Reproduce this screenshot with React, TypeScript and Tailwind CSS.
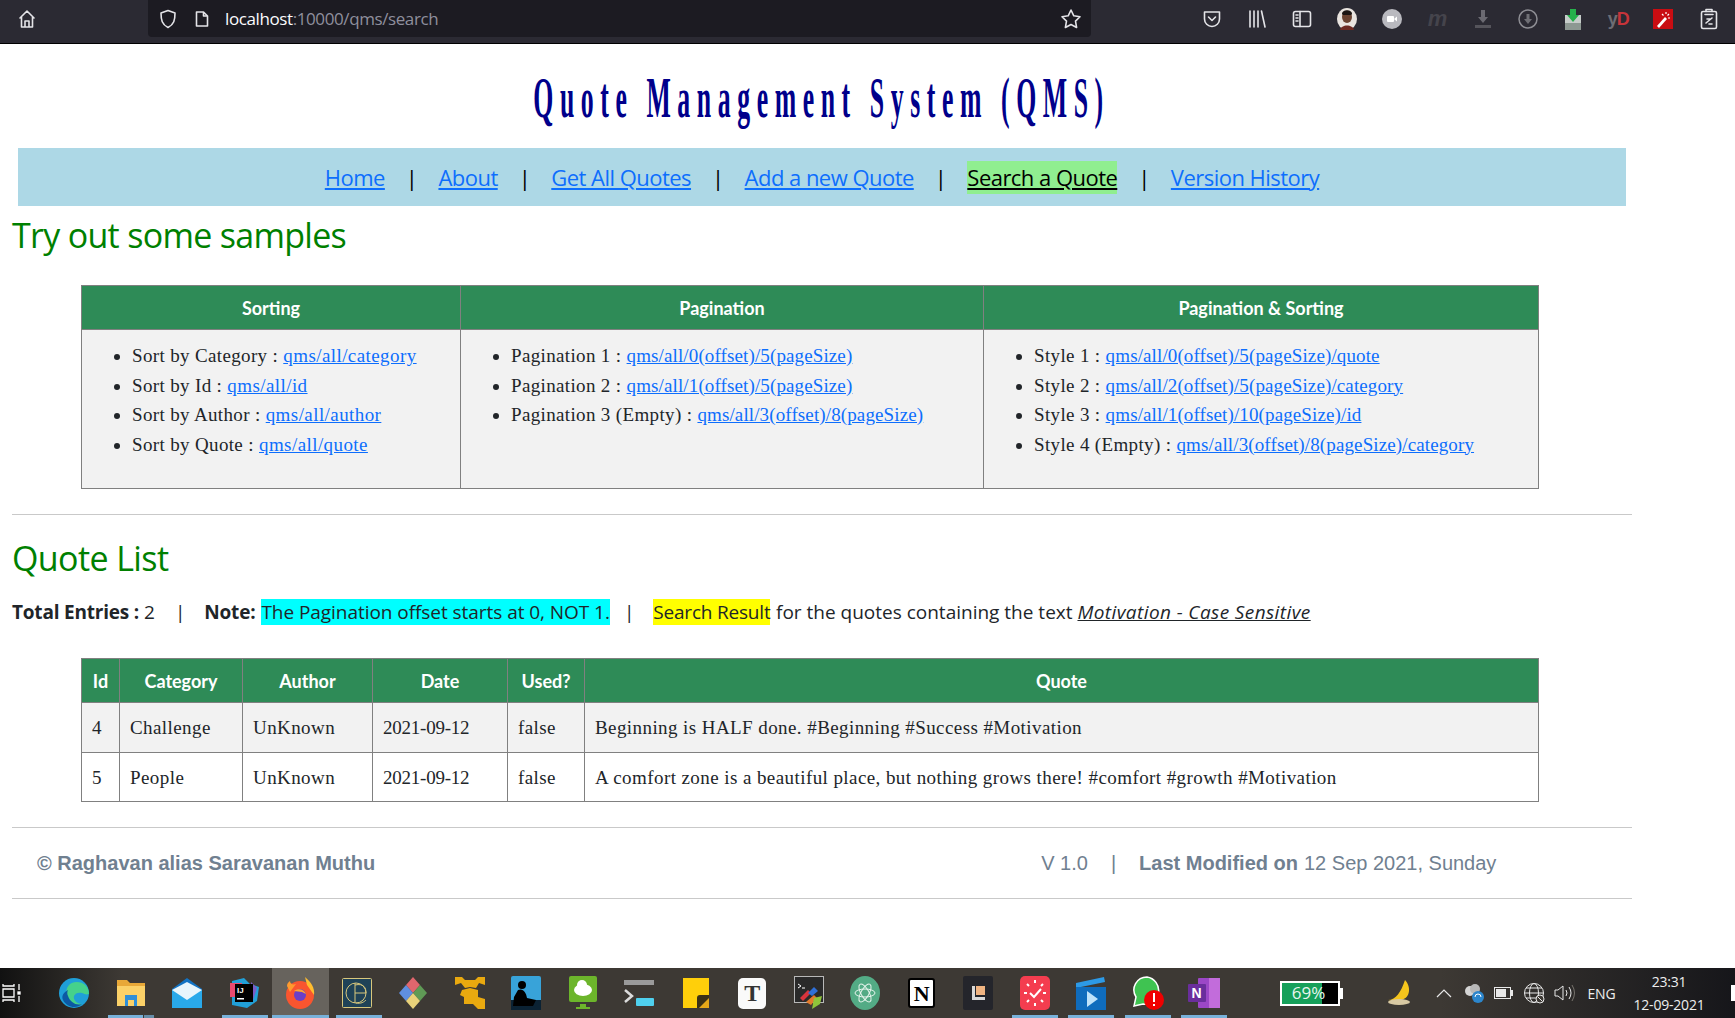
import { ReactNode } from 'react';

const serif = "font-['Liberation_Serif',serif]";
const heading = "font-['Lato',sans-serif] font-bold text-white text-[18px] text-center";

function ToolIcon({ children, className = '' }: { children: ReactNode; className?: string }) {
  return <div className={`w-[45.2px] h-[37px] flex items-center justify-center ${className}`}>{children}</div>;
}

function Toolbar() {
  const line = { fill: 'none', stroke: '#e4e4e8', strokeWidth: 1.6, strokeLinecap: 'round' as const, strokeLinejoin: 'round' as const };
  return (
    <header className="h-[44px] bg-[#2b2a33] border-b border-black flex shrink-0">
      <div className="w-[148px] h-[37px] flex items-center pl-[17px]">
        <svg width="20" height="20" viewBox="0 0 20 20" {...line}>
          <path d="M3 9 10 2l7 7M4.5 8v10h11V8M8 18v-6h4v6" />
        </svg>
      </div>
      <div className="w-[943px] h-[37px] bg-[#1c1b22] rounded-b-[4px] flex items-center">
        <svg className="ml-[11px]" width="18" height="20" viewBox="0 0 18 20" {...line}>
          <path d="M9 1.5 2 4c0 7 1 11.500 7 14.500C15 15.500 16 11 16 4Z" />
        </svg>
        <svg className="ml-[17px]" width="16" height="18" viewBox="0 0 16 18" {...line}>
          <path d="M2.500 2h7l4 4v10h-11ZM9.500 2v4h4" />
        </svg>
        <span className="ml-[15px] font-['Open_Sans',sans-serif] text-[17px] text-[#fbfbfe] tracking-[-0.4px]">
          localhost<span className="text-[#8f8f9d]">:10000/qms/search</span>
        </span>
        <svg className="ml-auto mr-[9px]" width="22" height="22" viewBox="0 0 22 22" {...line}>
          <path d="m11 2 2.800 5.800 6.200.9-4.500 4.400 1.100 6.400L11 16.500l-5.600 3 1.100-6.400L2 8.700l6.200-.9Z" />
        </svg>
      </div>
      <div className="flex pl-[98px]">
        <ToolIcon>
          <svg width="20" height="20" viewBox="0 0 20 20" {...line}>
            <path d="M2.500 3h15v7a7.500 7.500 0 0 1-15 0ZM6.500 8l3.500 3.500L13.500 8" />
          </svg>
        </ToolIcon>
        <ToolIcon>
          <svg width="20" height="20" viewBox="0 0 20 20" {...line}>
            <path d="M3 2v16M7 2v16M11 2v16M14.500 2l3.500 16" />
          </svg>
        </ToolIcon>
        <ToolIcon>
          <svg width="20" height="20" viewBox="0 0 20 20" {...line}>
            <rect x="1.500" y="2.500" width="17" height="15" rx="2" />
            <path d="M8 2.500v15M4 6h2M4 9h2M4 12h2" />
          </svg>
        </ToolIcon>
        <ToolIcon>
          <svg width="20" height="22" viewBox="0 0 20 22">
            <ellipse cx="10" cy="11" rx="10" ry="11" fill="#e9e4df" />
            <ellipse cx="10" cy="9" rx="5" ry="6" fill="#6a4230" />
            <path d="M5 6c0-5 10-5 10 0l-1 1H6Z" fill="#1c1512" />
            <path d="M3 22c1-6 13-6 14 0Z" fill="#6d2a22" />
          </svg>
        </ToolIcon>
        <ToolIcon>
          <svg width="20" height="20" viewBox="0 0 20 20">
            <circle cx="10" cy="10" r="10" fill="#b9b9bf" />
            <rect x="5" y="7" width="7" height="6" rx="1" fill="#fff" />
            <path d="m12 10 3-2.500v5Z" fill="#fff" />
          </svg>
        </ToolIcon>
        <ToolIcon>
          <span className="font-['Liberation_Sans',sans-serif] italic font-bold text-[22px] text-[#45444c] leading-none">m</span>
        </ToolIcon>
        <ToolIcon>
          <svg width="20" height="20" viewBox="0 0 20 20">
            <path d="M8 1h4v7h3l-5 6-5-6h3Z" fill="#6b6a72" />
            <rect x="2" y="16" width="16" height="3" fill="#55545b" />
          </svg>
        </ToolIcon>
        <ToolIcon>
          <svg width="20" height="20" viewBox="0 0 20 20" fill="none">
            <circle cx="10" cy="10" r="9" stroke="#8e8e94" strokeWidth="1.500" />
            <path d="M8.500 5h3v5H14l-4 5-4-5h2.500Z" fill="#6f6f75" />
          </svg>
        </ToolIcon>
        <ToolIcon>
          <svg width="20" height="22" viewBox="0 0 20 22">
            <path d="M2 7h16v15H2Z" fill="#c6ccc9" />
            <path d="M2 15h16v7H2Z" fill="#8d9892" />
            <path d="M7 1h6v6h3l-6 7-6-7h3Z" fill="#26b14b" />
          </svg>
        </ToolIcon>
        <ToolIcon>
          <span className="font-['Liberation_Sans',sans-serif] font-bold text-[18px] leading-none text-[#6d6d74] tracking-[-1px]">
            y<span className="text-[#c7343a]">D</span>
          </span>
        </ToolIcon>
        <ToolIcon>
          <svg width="20" height="20" viewBox="0 0 20 20">
            <rect width="20" height="20" fill="#c90d12" />
            <path d="m4 17 8-9 2 2-8 9Z" fill="#fff" />
            <path d="M13 3v2M16 5l-1.500 1.500M17 9h-2M9 5l1.500 1.500" stroke="#fff" strokeWidth="1.200" />
          </svg>
        </ToolIcon>
        <ToolIcon>
          <svg width="18" height="22" viewBox="0 0 18 22" {...line}>
            <rect x="1.500" y="3.500" width="15" height="17" rx="1.500" />
            <path d="M6 3.500V1.500h6v2M5 6.500h8M6 15l6-5M7 11h3M9 16h3" />
          </svg>
        </ToolIcon>
      </div>
    </header>
  );
}

function Sep() {
  return <span className="text-black">|</span>;
}

function Nav() {
  const link = 'text-[#0d6efd] underline';
  return (
    <nav className="mt-[21px] ml-[18px] w-[1608px] h-[58px] bg-[#add8e6] flex items-center justify-center gap-[21px] text-[22px] tracking-[-0.53px]">
      <a className={link}>Home</a>
      <Sep />
      <a className={link}>About</a>
      <Sep />
      <a className={link}>Get All Quotes</a>
      <Sep />
      <a className={link}>Add a new Quote</a>
      <Sep />
      <a className="text-black underline bg-[#90ee90]">Search a Quote</a>
      <Sep />
      <a className={link}>Version History</a>
    </nav>
  );
}

function Sample({ label, href }: { label: string; href: string }) {
  // the offset links run long in this font, so they get tighter spacing
  const spacing = href.includes('(') ? 'tracking-[0.12px]' : 'tracking-[0.42px]';
  return (
    <li className="h-[29.5px] leading-[29.5px]">
      {label} : <a className={`text-[#0d6efd] underline ${spacing}`}>{href}</a>
    </li>
  );
}

const thClass = `${heading} bg-[#2e8b57] border border-[#808080] h-[44px] pt-[2px] font-bold tracking-normal`;
const sampleTd = `border border-[#808080] align-top pt-[11px] pl-[33px] h-[159px]`;

function SamplesTable() {
  return (
    <table className={`ml-[81px] w-[1457px] border-collapse table-fixed ${serif} text-[19px] text-[#212529] tracking-[0.35px]`}>
      <colgroup>
        <col className="w-[379px]" />
        <col className="w-[523px]" />
        <col className="w-[555px]" />
      </colgroup>
      <thead>
        <tr>
          <th className={thClass}>Sorting</th>
          <th className={thClass}>Pagination</th>
          <th className={thClass}>Pagination &amp; Sorting</th>
        </tr>
      </thead>
      <tbody>
        <tr className="bg-[#f2f2f2]">
          <td className={sampleTd}>
            <ul className="list-disc pl-[17px]">
              <Sample label="Sort by Category" href="qms/all/category" />
              <Sample label="Sort by Id" href="qms/all/id" />
              <Sample label="Sort by Author" href="qms/all/author" />
              <Sample label="Sort by Quote" href="qms/all/quote" />
            </ul>
          </td>
          <td className={sampleTd}>
            <ul className="list-disc pl-[17px]">
              <Sample label="Pagination 1" href="qms/all/0(offset)/5(pageSize)" />
              <Sample label="Pagination 2" href="qms/all/1(offset)/5(pageSize)" />
              <Sample label="Pagination 3 (Empty)" href="qms/all/3(offset)/8(pageSize)" />
            </ul>
          </td>
          <td className={sampleTd}>
            <ul className="list-disc pl-[17px]">
              <Sample label="Style 1" href="qms/all/0(offset)/5(pageSize)/quote" />
              <Sample label="Style 2" href="qms/all/2(offset)/5(pageSize)/category" />
              <Sample label="Style 3" href="qms/all/1(offset)/10(pageSize)/id" />
              <Sample label="Style 4 (Empty)" href="qms/all/3(offset)/8(pageSize)/category" />
            </ul>
          </td>
        </tr>
      </tbody>
    </table>
  );
}

const quotes = [
  { id: 4, category: 'Challenge', quote: 'Beginning is HALF done. #Beginning #Success #Motivation' },
  { id: 5, category: 'People', quote: 'A comfort zone is a beautiful place, but nothing grows there! #comfort #growth #Motivation' },
];

function QuoteTable() {
  const td = 'border border-[#808080] pl-[10px] pt-[2px]';
  return (
    <table className={`ml-[81px] w-[1458px] border-collapse table-fixed ${serif} text-[19px] text-[#212529] tracking-[0.42px]`}>
      <colgroup>
        <col className="w-[38px]" />
        <col className="w-[123px]" />
        <col className="w-[130px]" />
        <col className="w-[135px]" />
        <col className="w-[77px]" />
        <col />
      </colgroup>
      <thead>
        <tr>
          {['Id', 'Category', 'Author', 'Date', 'Used?', 'Quote'].map((h) => (
            <th key={h} className={thClass}>{h}</th>
          ))}
        </tr>
      </thead>
      <tbody>
        {quotes.map((q, i) => (
          <tr key={q.id} className={`h-[49.500px] ${i === 0 ? 'bg-[#f2f2f2]' : 'bg-white'}`}>
            <td className={td}>{q.id}</td>
            <td className={td}>{q.category}</td>
            <td className={td}>UnKnown</td>
            <td className={`${td} tracking-[-0.24px]`}>2021-09-12</td>
            <td className={td}>false</td>
            <td className={td}>{q.quote}</td>
          </tr>
        ))}
      </tbody>
    </table>
  );
}

function Slot({ children, bar }: { children: ReactNode; bar?: ReactNode }) {
  return (
    <div className="relative w-[56.500px] h-[50px] flex items-center justify-center">
      {children}
      {bar}
    </div>
  );
}

function Bar({ className }: { className: string }) {
  return <div className={`absolute bottom-0 h-[3px] bg-[#78b1da] ${className}`} />;
}

function TaskIcons() {
  return (
    <div className="flex">
      <Slot>
        <svg width="30" height="30" viewBox="0 0 30 30">
          <circle cx="15" cy="15" r="15" fill="#1f9fd8" />
          <path d="M30 16c0-8-6-12-12-12C10 4 6 10 8 17c2 7 9 12 15 9-5 0-9-4-8-8 1-3 5-4 8-3 3 1 4 2 7 1Z" fill="#45d18b" />
          <path d="M4 22c4 8 14 9 19 4-6 2-12-2-14-8-1-2-1-4 0-6-4 2-7 6-5 10Z" fill="#0c59a4" />
        </svg>
      </Slot>
      <Slot bar={<><Bar className="left-[5.500px] w-[35px]" /><Bar className="left-[41px] w-[10px] opacity-70" /></>}>
        <svg width="28" height="28" viewBox="0 0 28 28">
          <path d="M0 1h10l3 3h15v23H0Z" fill="#e8a838" />
          <path d="M0 7h28v20H0Z" fill="#fbd168" />
          <path d="M8 16h12v11h-3v-6h-6v6H8Z" fill="#2f8fd8" />
        </svg>
      </Slot>
      <Slot>
        <svg width="30" height="30" viewBox="0 0 30 30">
          <path d="M0 11 15 0l15 11v19H0Z" fill="#1273c4" />
          <path d="M0 12h30v18H0Z" fill="#29a9ea" />
          <path d="m0 12 15 10 15-10L15 4Z" fill="#e8f5fc" />
        </svg>
      </Slot>
      <Slot bar={<Bar className="left-[6px] w-[46px]" />}>
        <svg width="30" height="30" viewBox="0 0 30 30">
          <path d="M3 3 15 0l6 6 9 3-2 14-10 7-15-3Z" fill="#21a0d8" />
          <path d="M1 5h12v14H1Z" fill="#e84a6f" />
          <path d="M22 4l6 6-4 12-3-3Z" fill="#7b5cc5" />
          <rect x="6" y="6" width="18" height="18" fill="#000" />
          <text x="8" y="15" fill="#fff" fontSize="8" fontWeight="700" fontFamily="Liberation Sans">IJ</text>
          <rect x="8" y="20" width="7" height="1.500" fill="#fff" />
        </svg>
      </Slot>
      <Slot>
        <div className="absolute inset-0 bg-[#67635d]" />
        <div className="absolute bottom-0 inset-x-0 h-[3px] bg-[#78b1da]" />
        <svg className="relative" width="30" height="32" viewBox="0 0 30 32">
          <circle cx="15" cy="18" r="14" fill="#f9552f" />
          <path d="M20 0c6 5 10 11 9 18L22 8Z" fill="#ffbd2e" />
          <path d="M2 9c0-3 2-4 3-5 0 3 3 4 6 3l-6 8Z" fill="#ff9a2e" />
          <circle cx="15" cy="18" r="6" fill="#6b3fc7" />
          <path d="M9 14c4-3 10-2 12 3l-4-2Z" fill="#ffa52e" />
        </svg>
      </Slot>
      <Slot bar={<Bar className="left-[7.500px] w-[46px]" />}>
        <svg width="30" height="30" viewBox="0 0 30 30" fill="none">
          <rect x="0.500" y="0.500" width="29" height="29" rx="1" fill="#1f4257" stroke="#d8c77c" />
          <circle cx="14" cy="15" r="10" stroke="#d8c77c" />
          <path d="M13 5v20M13 15h11M13 7c9-2 11 3 11 8M14 25c5 1 8-1 10-3" stroke="#d8c77c" />
        </svg>
      </Slot>
      <Slot>
        <svg width="30" height="34" viewBox="0 0 30 34">
          <path d="m15 1 7 8-7 8-7-8Z" fill="#e0666d" />
          <path d="m22 9 7 8-7 8-7-8Z" fill="#5f9a55" />
          <path d="m8 9 7 8-7 8-7-8Z" fill="#5f8fe0" />
          <path d="m15 17 7 8-7 8-7-8Z" fill="#e9d27a" />
        </svg>
      </Slot>
      <Slot>
        <svg width="30" height="34" viewBox="0 0 30 34">
          <path d="M0 1h7l3 3h10l3-3h7v8l-6-2-3 5-6-1-5 1-4-5-6 2Z M7 14l8-2 8 2v7l7 2v10h-7l-5-5H9v-7l-4-2Z" fill="#e9a90f" />
        </svg>
      </Slot>
      <Slot>
        <svg width="30" height="34" viewBox="0 0 30 34">
          <rect width="30" height="34" rx="2" fill="#38a3d9" />
          <path d="M0 24h30v10H0Z" fill="#0b2233" />
          <circle cx="11" cy="9" r="4" fill="#000" />
          <path d="M7 14c5-2 8 2 9 8l9 2-3 6H2l1-9Z" fill="#000" />
        </svg>
      </Slot>
      <Slot>
        <svg width="28" height="34" viewBox="0 0 28 34">
          <rect width="28" height="26" rx="2" fill="#6cb52b" />
          <path d="M11 28h6v3h4v2H7v-2h4Z" fill="#6cb52b" />
          <ellipse cx="14" cy="14" rx="9" ry="6" fill="#fff" />
          <circle cx="13" cy="9" r="5" fill="#fff" />
        </svg>
      </Slot>
      <Slot>
        <svg width="30" height="26" viewBox="0 0 30 26">
          <rect width="30" height="5" fill="#9a9a9a" />
          <path d="m1 10 7 6-7 6" fill="none" stroke="#dcdcdc" strokeWidth="2.500" />
          <rect x="12" y="18" width="18" height="8" rx="1" fill="#4fd0ee" />
        </svg>
      </Slot>
      <Slot>
        <svg width="26" height="30" viewBox="0 0 26 30">
          <path d="M0 0h26v20L16 30H0Z" fill="#ffcf0a" />
          <path d="M14 30V20q0-3 3-3h9v5l-8 8Z" fill="#3b3116" />
          <path d="M16 30l10-10v10Z" fill="#e6a819" />
        </svg>
      </Slot>
      <Slot>
        <div className="w-[28px] h-[31px] bg-[#fafafa] rounded-[5px] flex items-center justify-center font-['Liberation_Serif',serif] font-bold text-[24px] text-[#333]">T</div>
      </Slot>
      <Slot>
        <svg width="30" height="34" viewBox="0 0 30 34">
          <rect x="0.500" y="0.500" width="29" height="26" fill="#2a2a2a" stroke="#b8b8b8" />
          <path d="m4 8 3 2-3 2M8 12h3" stroke="#fff" fill="none" />
          <path d="m6 22 8-8 3 3-8 8Z" fill="#d8343c" />
          <path d="m14 17 6-6 4 4-6 5Z" fill="#2e6fd8" />
          <path d="m12 26 8-7 3 3-6 7Z" fill="#e37b2c" />
          <path d="m20 22 8-2-2 8-8 5Z" fill="#8fc43a" />
        </svg>
      </Slot>
      <Slot>
        <svg width="30" height="34" viewBox="0 0 30 34" fill="none">
          <ellipse cx="15" cy="17" rx="15" ry="17" fill="#53ab85" />
          <ellipse cx="15" cy="17" rx="10" ry="4" stroke="#e8f5ee" transform="rotate(60 15 17)" />
          <ellipse cx="15" cy="17" rx="10" ry="4" stroke="#e8f5ee" transform="rotate(-60 15 17)" />
          <ellipse cx="15" cy="17" rx="10" ry="4" stroke="#e8f5ee" />
        </svg>
      </Slot>
      <Slot>
        <div className="w-[27px] h-[30px] bg-white border-2 border-black rounded-[3px] flex items-center justify-center font-['Liberation_Serif',serif] font-bold text-[22px] text-black">N</div>
      </Slot>
      <Slot>
        <svg width="30" height="34" viewBox="0 0 30 34">
          <rect width="30" height="34" rx="2" fill="#24252b" />
          <path d="M9 10h3v11h10v3H9Z" fill="#d8d8d8" />
          <path d="M13 10h9v9h-9Z" fill="#f0b482" />
        </svg>
      </Slot>
      <Slot bar={<Bar className="left-[5px] w-[46px]" />}>
        <svg width="30" height="34" viewBox="0 0 30 34">
          <rect width="30" height="34" rx="5" fill="#f43d4f" />
          <path d="m10 17 4 4 7-8" stroke="#fff" strokeWidth="2" fill="none" />
          <path d="M15 4v3M15 27v3M4 17h3M23 17h3M7 8l2 2M23 8l-2 2M7 26l2-2M23 26l-2-2" stroke="#fff" strokeWidth="2" />
        </svg>
      </Slot>
      <Slot bar={<Bar className="left-[5px] w-[46px]" />}>
        <svg width="30" height="34" viewBox="0 0 30 34">
          <path d="M0 7 28 1l1 5-29 6Z" fill="#2d9ae6" />
          <path d="M0 11h30v23H0Z" fill="#0f6cbd" />
          <path d="m11 15 11 8-11 8Z" fill="#bfe3fa" />
        </svg>
      </Slot>
      <Slot bar={<Bar className="left-[5px] w-[46px]" />}>
        <svg width="32" height="34" viewBox="0 0 32 34">
          <path d="M15 1a13 13 0 0 0-11 20l-2 9 9-2A13 13 0 1 0 15 1Z" fill="#3fc351" stroke="#fff" strokeWidth="1.500" />
          <circle cx="22" cy="24" r="10" fill="#f00000" />
          <rect x="21" y="17" width="2" height="9" fill="#fff" />
          <rect x="21" y="28" width="2" height="2" fill="#fff" />
        </svg>
      </Slot>
      <Slot bar={<Bar className="left-[5px] w-[46px]" />}>
        <svg width="32" height="30" viewBox="0 0 32 30">
          <rect x="10" width="22" height="30" rx="1" fill="#9c47c7" />
          <rect x="21" width="11" height="30" fill="#c26cdb" />
          <rect y="6" width="18" height="18" rx="1" fill="#6a2e9c" />
          <text x="3.500" y="20" fill="#fff" fontSize="14" fontWeight="700" fontFamily="Liberation Sans">N</text>
        </svg>
      </Slot>
    </div>
  );
}

function Tray() {
  return (
    <div className="flex items-center h-full">
      <div className="relative w-[60px] h-[25px] border-[2px] border-white bg-black flex overflow-visible">
        <div className="w-[40px] h-full bg-[#16a05a]" />
        <span className="absolute inset-0 flex items-center justify-center pr-[3px] font-['Open_Sans',sans-serif] text-[17px] text-[#e9f5ee]">69%</span>
        <div className="absolute -right-[5px] top-[5px] w-[3px] h-[11px] bg-white" />
      </div>
      <svg className="ml-[45px]" width="30" height="30" viewBox="0 0 30 30">
        <path d="M20 2c6 6 6 18-4 20-4 1-9 1-13 0 8 0 13-8 17-20Z" fill="#f5c51c" />
        <ellipse cx="14" cy="24" rx="11" ry="3" fill="#d8c9a3" />
      </svg>
      <svg className="ml-[21px]" width="16" height="10" viewBox="0 0 16 10" fill="none" stroke="#e8e8e8" strokeWidth="1.200">
        <path d="m1 9 7-7 7 7" />
      </svg>
      <svg className="ml-[10.500px]" width="22" height="22" viewBox="0 0 22 22">
        <circle cx="7" cy="9" r="5" fill="#d4d4d4" />
        <circle cx="12" cy="7" r="5" fill="#b8b8b8" />
        <circle cx="15" cy="15" r="6" fill="#2c86cc" />
        <path d="M12 15a3 3 0 0 1 6 0" stroke="#fff" fill="none" />
      </svg>
      <svg className="ml-[9px]" width="20" height="12" viewBox="0 0 20 12" fill="none">
        <rect x="0.500" y="0.500" width="16" height="11" stroke="#e8e8e8" />
        <rect x="2" y="2" width="10" height="8" fill="#e8e8e8" />
        <rect x="17" y="3" width="2" height="6" fill="#e8e8e8" />
      </svg>
      <svg className="ml-[9px]" width="22" height="22" viewBox="0 0 22 22" fill="none" stroke="#e8e8e8">
        <circle cx="11" cy="11" r="9.500" />
        <ellipse cx="11" cy="11" rx="4.500" ry="9.500" />
        <path d="M1.500 11h19M3 6h16M3 16h16" />
        <circle cx="17" cy="17" r="4" fill="#3d3934" />
        <path d="m14.500 14.500 5 5" />
      </svg>
      <svg className="ml-[9px]" width="22" height="18" viewBox="0 0 22 18" fill="none" stroke="#e8e8e8">
        <path d="M1 6h3l5-4v14l-5-4H1ZM12 6q2 3 0 6M15 3q4 6 0 12" />
        <path d="M18 1q5 8 0 16" stroke="#77736d" />
      </svg>
      <span className="ml-[12px] w-[36px] font-['Open_Sans',sans-serif] text-[14px] text-[#eee] tracking-[-0.2px]">ENG</span>
      <div className="ml-[5.500px] w-[80px] text-center font-['Open_Sans',sans-serif] text-[14px] leading-[23px] text-[#eee] tracking-[-0.2px] whitespace-nowrap">
        <div>23:31</div>
        <div>12-09-2021</div>
      </div>
      <div className="ml-[22px] w-[4px] h-[16px] bg-white" />
    </div>
  );
}

function Taskbar() {
  return (
    <footer className="h-[50px] mt-auto flex justify-between bg-[#3d3934] bg-[linear-gradient(90deg,#111_0%,#3d3934_7%,#3d3934_83%,#16161a_100%)] shrink-0">
      <div className="flex">
        <div className="w-[46px] flex items-center pl-[2px]">
          <svg width="20" height="20" viewBox="0 0 20 20" fill="none" stroke="#fff" strokeWidth="1.300">
            <path d="M1 1v2h11V1M1 19v-2h11v2M1 6h11v8H1ZM17 1v6M17 13v6" />
            <rect x="16" y="9" width="2" height="2" fill="#fff" />
          </svg>
        </div>
        <TaskIcons />
      </div>
      <Tray />
    </footer>
  );
}

export default function App() {
  return (
    <div className="min-h-[1018px] h-[1018px] overflow-hidden flex flex-col bg-white font-['Open_Sans',sans-serif] text-[#212529]">
      <Toolbar />
      <main className="w-[1632px] flex flex-col">
        <h1 className={`mt-[26px] ml-[12px] h-[57px] leading-[57px] text-center ${serif} font-bold text-[#00008b] whitespace-nowrap flex justify-center`}>
          <span className="inline-block shrink-0 text-[56px] tracking-[14.300px] scale-x-[0.46]">Quote Management System (QMS)</span>
        </h1>
        <Nav />
        <h2 className="mt-[7px] pl-[12px] text-[34px] leading-[44px] text-[#008000] tracking-[-0.7px]">Try out some samples</h2>
        <div className="mt-[28px]">
          <SamplesTable />
        </div>
        <hr className="mt-[25px] ml-[12px] w-[1620px] border-t border-[#c9c9c9]" />
        <h2 className="mt-[21px] pl-[12px] text-[34px] leading-[44px] text-[#008000] tracking-[-0.6px]">Quote List</h2>
        <p className="mt-[18px] pl-[12px] text-[19px] leading-[28px] whitespace-nowrap tracking-normal">
          <b className="tracking-[-0.2px]">Total Entries :</b> 2
          <span className="ml-[20px] mr-[19px]">|</span>
          <b className="tracking-[-0.2px]">Note:</b>
          <span className="ml-[6px] bg-[#00ffff] tracking-[-0.05px]">The Pagination offset starts at 0, NOT 1.</span>
          <span className="ml-[14px] mr-[11px]">|</span>
          <span className="ml-[8px] mr-[5.500px] bg-[#ffff00] tracking-[-0.2px]">Search Result</span>
          for the quotes containing the text <i className="underline tracking-[0.4px]">Motivation - Case Sensitive</i>
        </p>
        <div className="mt-[32px]">
          <QuoteTable />
        </div>
        <hr className="mt-[25px] ml-[12px] w-[1620px] border-t border-[#c9c9c9]" />
        <div className="h-[70px] flex items-center font-['Liberation_Sans',sans-serif] text-[20px] text-[#708090]">
          <b className="ml-[37px]">© Raghavan alias Saravanan Muthu</b>
          <span className="ml-[666px]">V 1.0</span>
          <span className="mx-[23px]">|</span>
          <b>Last Modified on</b>
          <span className="ml-[6px]">12 Sep 2021, Sunday</span>
        </div>
        <hr className="ml-[12px] w-[1620px] border-t border-[#c9c9c9]" />
      </main>
      <Taskbar />
    </div>
  );
}
